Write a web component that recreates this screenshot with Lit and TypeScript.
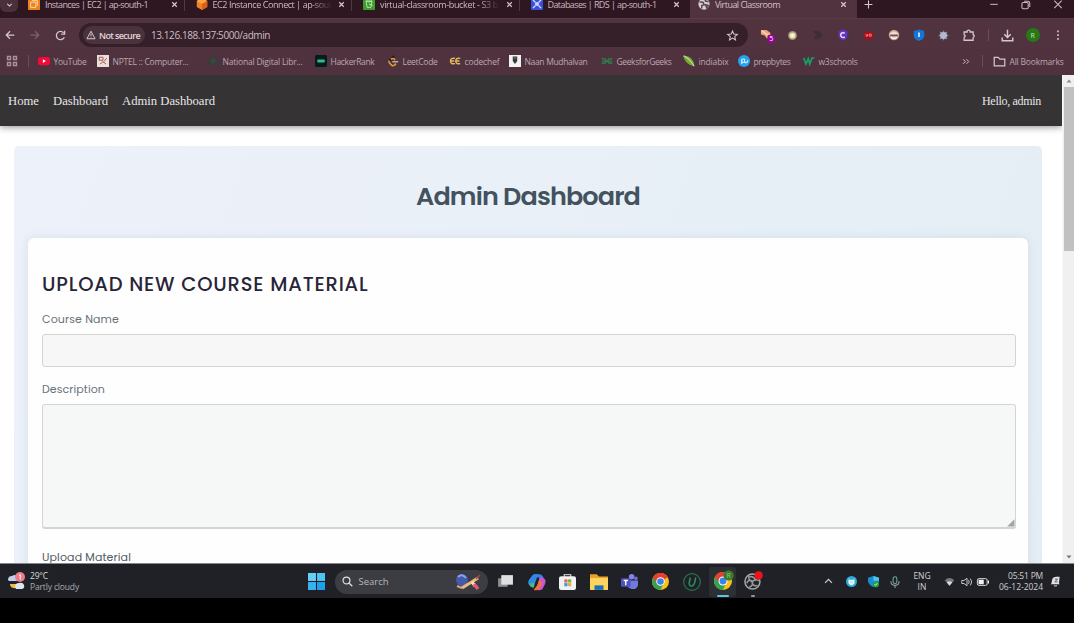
import { LitElement, html, css, svg } from "lit";
import { customElement, property } from "lit/decorators.js";

/* A one-line label whose tracking is computed so the text spans `w` pixels. */
@customElement("fit-text")
class FitText extends LitElement {
  static styles = css`
    :host { display: inline-block; white-space: pre; flex: none; }
  `;
  @property({ type: Number }) w = 0;
  @property() text = "";
  firstUpdated() {
    const span = this.renderRoot.querySelector("span") as HTMLElement;
    const natural = span.getBoundingClientRect().width;
    if (this.w && natural) {
      span.style.letterSpacing = `${(this.w - natural) / this.text.length}px`;
    }
  }
  render() {
    return html`<span>${this.text}</span>`;
  }
}

const t = (text: string, w: number) => html`<fit-text .text=${text} .w=${w}></fit-text>`;
const icon = (size: number, body: unknown, box = 16) =>
  html`<svg width=${size} height=${size} viewBox="0 0 ${box} ${box}" fill="none">${body}</svg>`;

const cross = icon(9, svg`<path d="M4 4l8 8M12 4l-8 8" stroke="#d9c8cf" stroke-width="2.100"/>`);
const chrome = svg`
  <circle cx="8" cy="8" r="8" fill="#fbc116"/>
  <path d="M8 8 L1.1 4 A8 8 0 0 1 14.9 4 Z" fill="#e8402f"/>
  <path d="M8 8 L1.1 4 A8 8 0 0 0 8 16 L10.5 10.5Z" fill="#34a350"/>
  <path d="M8 4.2H15a8 8 0 0 0-14-.2L4.6 10Z" fill="#e8402f"/>
  <circle cx="8" cy="8" r="4" fill="#fff"/><circle cx="8" cy="8" r="3.1" fill="#3b82ec"/>`;

const tabs = [
  { label: "Instances | EC2 | ap-south-1", w: 103, fade: false,
    art: svg`<rect width="16" height="16" rx="1" fill="#ee8220"/><path d="M3.500 5.500h7v7h-7zM5.500 3.500h7v7" stroke="#ffd9a6" stroke-width="1.300"/>` },
  { label: "EC2 Instance Connect | ap-sout", w: 119, fade: true,
    art: svg`<path d="M8 0l7 4v8l-7 4-7-4V4z" fill="#f08125"/><path d="M8 0l7 4-7 4-7-4z" fill="#ffa446"/><path d="M8 8l7-4v8l-7 4z" fill="#d9601a"/>` },
  { label: "virtual-classroom-bucket - S3 b", w: 118, fade: true,
    art: svg`<rect width="16" height="16" rx="1" fill="#3f9a30"/><path d="M4 4l1.500 8.500h5L12 4zM4 4q4 2.500 8 0M8 8l5 2" stroke="#b8e4a5" stroke-width="1.300"/>` },
  { label: "Databases | RDS | ap-south-1", w: 109, fade: false,
    art: svg`<rect width="16" height="16" rx="1" fill="#3a50dc"/><path d="M2.500 2.500l3.500 3.500M13.500 2.500L10 6M2.500 13.500L6 10M13.500 13.500L10 10" stroke="#dbe2ff" stroke-width="1.600"/><circle cx="8" cy="8" r="2.800" fill="#c9d4ff"/>` },
  { label: "Virtual Classroom", w: 65, fade: false,
    art: svg`<circle cx="8" cy="8" r="7.500" fill="#d5cdd2"/><path d="M2 5l5 1 1 3-3 1v4M9 1l1 3 4 1M10 9l4 1-2 4z" stroke="#5d4751" stroke-width="2"/>` },
];

const bookmarks = [
  { label: "YouTube", w: 33, art: svg`<rect x="0" y="2.500" width="16" height="11" rx="3" fill="#f5093a"/><path d="M6.500 5.500v5l4-2.500z" fill="#fff"/>` },
  { label: "NPTEL :: Computer...", w: 76, art: svg`<rect width="16" height="16" fill="#eadfdb"/><path d="M3 3h5v4H3zM9 9l4-5M4 12l4-3 4 3" stroke="#a65a4c" stroke-width="1.300"/>` },
  { label: "National Digital Libr...", w: 80, art: svg`<circle cx="8" cy="8" r="7" fill="#3d3b3b"/><path d="M4 8h8M8 4v8" stroke="#394c3e" stroke-width="2"/>` },
  { label: "HackerRank", w: 44, art: svg`<rect width="16" height="16" rx="2" fill="#091a1e"/><rect x="3" y="6" width="10" height="4" rx="1" fill="#26c08b"/>` },
  { label: "LeetCode", w: 35, art: svg`<path d="M9.500 1L3 7.500" stroke="#1b1517" stroke-width="2"/><path d="M3 7.500q-1 1.500 0 2.500l3 3.500q1.500 1.500 4 0l2-2M5 5.500q3-2 6 1" stroke="#eaa02f" stroke-width="2"/><path d="M7 9h8" stroke="#c8b4ba" stroke-width="1.800"/>` },
  { label: "codechef", w: 35, art: svg`<path d="M8 4.500q-6-1-6 3.500t6 3.500M15 4.500q-6-1-6 3.500t6 3.500M3 8h4M10 8h4" stroke="#e0b65e" stroke-width="2"/>` },
  { label: "Naan Mudhalvan", w: 63, art: svg`<rect width="16" height="16" fill="#f4f1f1"/><path d="M5 2h6v6l-3 4-3-4z" fill="#343b3c"/><path d="M6 4h4" stroke="#8b9d6a"/>` },
  { label: "GeeksforGeeks", w: 55, art: svg`<path d="M1 5q6-1 6 3t-6 2.500M1 8h14M15 5q-6-1-6 3t6 2.500" stroke="#298b4d" stroke-width="1.600"/>` },
  { label: "indiabix", w: 30, art: svg`<path d="M0 1q14-1 15 14Q4 14 0 1z" fill="#75a63c"/><path d="M1 1q8 4 14 14" stroke="#c6dc89" stroke-width="1.500"/>` },
  { label: "prepbytes", w: 37, art: svg`<circle cx="8" cy="8" r="8" fill="#24a3ee"/><path d="M5 12V6q4-2 4 1.500T5 9M9 10q4 1 4-3" stroke="#d9f1ff" stroke-width="1.500"/>` },
  { label: "w3schools", w: 39, art: svg`<path d="M1 4l3 8 3-7 2 7 3-8h3" stroke="#15a566" stroke-width="2.200"/>` },
];

const extensions = [
  svg`<path d="M1 2h6l4 3v6H7L5 8 1 7z" fill="#e9a581"/><path d="M2 3l7 5" stroke="#ffd4b5" stroke-width="1.500"/><rect x="8" y="7.500" width="8" height="8.500" rx="1.500" fill="#930795"/><text x="12" y="14.200" font-size="7" fill="#fff" text-anchor="middle" font-family="Open Sans">5</text>`,
  svg`<circle cx="8" cy="8" r="6.500" fill="#a08e70"/><circle cx="8" cy="8" r="4.500" fill="#e6e1b8"/><path d="M6.500 6h3v4h-3z" fill="#fffbe0"/>`,
  svg`<path d="M2 3h5l5 5-5 5H2l4-5zM9 3l5 5-5 5" fill="#3f2d35" stroke="#3f2d35"/>`,
  svg`<path d="M8 1l6 2v5q0 5-6 7.500Q2 13 2 8V3z" fill="#6135c2"/><path d="M10.500 5.500Q5 4 5 8t5.500 3" stroke="#eadfff" stroke-width="2"/>`,
  svg`<path d="M1 3.500L5 2h6l4 1.500v7L11 14H5l-4-3.500z" fill="#a60f1d"/><path d="M4.500 6v3h2V6M9 6h3v3H9z" stroke="#ee8c91" stroke-width="1.300"/>`,
  svg`<circle cx="8" cy="8" r="7" fill="#c9a092"/><path d="M1.500 7q6-8 13 0z" fill="#eadbd1"/><path d="M3 8.500h10" stroke="#6d4f52" stroke-width="1.600"/><path d="M4 11q4 3 8 0" stroke="#fff" stroke-width="2"/>`,
  svg`<path d="M8 .5l7 2v6q0 5-7 7.500-7-2.500-7-7.500v-6z" fill="#1475d8"/><path d="M8 4.500v6" stroke="#dceeff" stroke-width="2.200"/>`,
  svg`<path d="M8 1v14M1 8h14M3 3l10 10M13 3L3 13" stroke="#7e8dad" stroke-width="2"/><circle cx="8" cy="8" r="5" fill="#b6b8cb"/>`,
  svg`<path d="M1.500 4h4V2.500q2-2 4 0V4h4v3.500q3 1.500 0 4V15h-12v-4q3-1.500 0-3.500z" stroke="#d6c6cd" stroke-width="1.700"/>`,
];

const apps = [
  svg`<path d="M1 5h9v8H1z" fill="#8b8c90"/><path d="M4 2h11v9H4z" fill="#dfdfe1"/>`,
  svg`<path d="M4 2q1-1 5-1L6 11q-1 2-4 1Q-1 9 1 6z" fill="#2c9bed"/><path d="M5 1h5q3 0 4 4L9 4 5 12H3Q0 10 2 6z" fill="#3286e8"/><path d="M2 9h4l-1 4q-2 0-3-2z" fill="#4fc06a"/><path d="M10 4h3q4 2 2 6l-2 4q-2 2-5 1z" fill="#c755d4"/><path d="M8 11l2-5 3 3-3 5q-2 2-5 1z" fill="#f0713b"/><path d="M8 4L5.500 11h2L10 4z" fill="#202126"/>`,
  svg`<path d="M5 4V1.500h6V4" stroke="#b8bcc0" stroke-width="1.300"/><rect y="3" width="16" height="13" rx="2" fill="#f0f1f2"/><path d="M5 6h3v3H5z" fill="#e16a42"/><path d="M8.500 6h3v3h-3z" fill="#80ad45"/><path d="M5 9.500h3v3H5z" fill="#3b98d8"/><path d="M8.500 9.500h3v3h-3z" fill="#e7ad32"/>`,
  svg`<path d="M0 1h6l2 2h8v12H0z" fill="#e6a327"/><path d="M0 4.500h16v10.500H0z" fill="#ffd35d"/><path d="M4 15v-4h8v4z" fill="#1872b8"/>`,
  svg`<circle cx="10" cy="3.500" r="2.600" fill="#8286ea"/><circle cx="14" cy="5" r="1.800" fill="#6a6ed2"/><path d="M6 7h10v4q-1 5-6 4-4-1-4-4z" fill="#7378dc"/><rect y="5" width="9" height="8" rx="1" fill="#4d55bd"/><path d="M2.500 7h4M4.500 7v4.500" stroke="#fff" stroke-width="1.300"/>`,
  chrome,
  svg`<circle cx="8" cy="8" r="7.400" stroke="#23734e" stroke-width="1.100"/><path d="M6.500 4L5.500 9q0 3 2.500 2.500Q10 11 10.500 8l.8-4" stroke="#2b9362" stroke-width="1.300"/>`,
];

@customElement("app-root")
class AppRoot extends LitElement {
  static styles = css`
    * { box-sizing: border-box; }
    :host { display: flex; flex-direction: column; width: 1074px; height: 623px; overflow: hidden; background: #000; font-family: "Open Sans", "Noto Sans", sans-serif; }
    svg { display: block; flex: none; overflow: visible; }
    .strip { height: 18px; flex: none; display: grid; grid-template-columns: 18px 2px repeat(4, 167.5px) 167px 22px 1fr; background: #2f1722; color: #cbb8c0; font-size: 9px; line-height: 11px; }
    .strip > * { margin-top: -1px; }
    .search-tabs { height: 13px; background: #4a303b; border-radius: 0 0 6px 6px; display: flex; justify-content: center; padding-top: 2px; }
    .tab { height: 19px; display: flex; align-items: flex-start; padding: 0 9px 0 8px; gap: 5px; }
    .tab > svg { margin-top: -1px; }
    .tab .close { margin-top: 1px; }
    .tab .name { flex: 1; min-width: 0; overflow: hidden; height: 12px; }
    .tab .faded { -webkit-mask-image: linear-gradient(90deg, #000 82%, transparent); mask-image: linear-gradient(90deg, #000 82%, transparent); }
    .line { width: 1px; height: 11px; background: #543844; margin: 1px -6px 0 0; }
    .tab.active { background: #50333f; color: #d3c0c8; }
    .plus { padding: 1px 0 0 7px; }
    .wins { display: flex; justify-content: flex-end; gap: 22px; padding: 1px 11px 0 0; }
    .toolbar { height: 31px; flex: none; background: #50333e; display: grid; grid-template-columns: 25px 25px 29px 669px 7px repeat(9, 25.2px) 14px 24px 26px 24px; align-items: center; justify-items: center; padding-top: 2px; border-top: 1px solid #573b45; }
    .toolbar .first { margin-right: 6px; }
    .toolbar .reload { margin-right: 9px; }
    .url { width: 669px; height: 24px; border-radius: 12px; background: #35202a; display: flex; align-items: center; padding: 0 10px 0 4px; color: #cdbcc4; font-size: 10px; }
    .chip { width: 62px; height: 18px; border-radius: 9px; background: #4b333e; display: flex; align-items: center; gap: 3px; padding-left: 3px; margin-right: 6px; font-size: 9px; font-weight: 600; color: #e2d4da; }
    .star { margin-left: auto; }
    .divider { width: 1px; height: 12px; background: #6b4d59; }
    .avatar { width: 14px; height: 14px; border-radius: 50%; background: #287817; color: #c5e8b8; display: grid; place-items: center; font-size: 7px; }
    .marks { height: 26px; flex: none; background: #4f323e; display: grid; grid-template-columns: 22px 10px 59px 110px 108px 72px 62px 60px 92px 82px 55px 65px 159px 20px 11px 1fr; padding: 0 9px 2px 6px; align-items: center; color: #bca7b0; font-size: 8.500px; }
    .mark { display: flex; align-items: center; gap: 3.5px; }
    .page { height: 489px; flex: none; display: grid; grid-template-columns: 1062px 12px; background: #fff; overflow: hidden; border-bottom: 1px solid #85858a; }
    .view { overflow: hidden; height: 488px; }
    nav { height: 51px; background: #353334; display: flex; align-items: center; gap: 14px; padding: 0 21px 0 8px; font: 12.700px/16px "Liberation Serif", serif; color: #e8e6e7; box-shadow: 0 1px 7px rgba(0, 0, 0, .45); }
    nav .hello { margin-left: auto; font-size: 12px; }
    .panel { margin: 20px 20px 0 14px; padding: 0 14px; height: 600px; border-radius: 5px; background: linear-gradient(110deg, #edf1f9, #eaf0f8 40%, #e6eff6 65%, #e5edf4); font-family: Poppins, Inter, sans-serif; }
    h1 { margin: 0; height: 92px; display: flex; justify-content: center; align-items: center; padding-top: 8px; font-size: 25.500px; font-weight: 600; line-height: 36px; color: #43525f; }
    .card { height: 500px; background: #fefefe; border-radius: 6px; padding: 32px 12px 0 14px; box-shadow: 0 0 10px rgba(80, 105, 120, .13); }
    h2 { margin: 0; height: 29px; line-height: 30px; font-size: 19.500px; font-weight: 500; color: #292538; }
    label { display: block; height: 16px; line-height: 16px; font-size: 11px; color: #68717b; }
    .l1 { margin: 12px 0 7px; }
    .l2 { margin: 14px 0 7px; }
    .l3 { margin: 20px 0 0; color: #515963; }
    .field { height: 33px; border: 1px solid #d3d4d4; border-radius: 3px; background: #f7f7f7; }
    .area { height: 125px; border-bottom-width: 2px; background: #f6f8f7; display: flex; justify-content: flex-end; align-items: flex-end; }
    .scroll { background: #f0f0f0; border-left: 1px solid #f8f8f8; display: flex; flex-direction: column; align-items: center; }
    .cap { height: 12px; display: flex; align-items: center; }
    .thumb { width: 10px; height: 164px; background: #c1c1c1; }
    .cap.down { margin-top: auto; }
    .taskbar { height: 34px; flex: none; background: #202126; display: grid; grid-template-columns: 301px 31px 158px repeat(7, 31px) 31px 30px 49px 23px 22px 22px 22px 32px 22px 14px 18px 51px 24px; align-items: center; justify-items: center; color: #d0d0d2; font-size: 8.500px; line-height: 11px; padding-top: 1px; }
    .weather { justify-self: start; display: flex; gap: 5px; padding: 0 0 2px 7px; align-items: center; }
    .weather .lines { display: flex; flex-direction: column; color: #aaaaae; }
    .lines fit-text:first-child { color: #dadadc; }
    .search { width: 153px; height: 24px; border-radius: 12px; background: #3c3d42; display: flex; align-items: center; gap: 6px; padding: 0 6px 0 7px; font-size: 9.500px; color: #b8b8bc; }
    .search .art { margin-left: auto; }
    .running { width: 27px; height: 30px; border-radius: 3px; background: #2c3034; display: flex; flex-direction: column; align-items: center; justify-content: space-between; padding-top: 5px; }
    .bar { width: 12px; height: 2px; border-radius: 1px; background: #59c5e4; }
    .obs { background: none; }
    .obs .bar { width: 4px; background: #929499; }
    .stack { display: flex; flex-direction: column; align-items: center; padding-bottom: 1px; }
    .clock { align-items: flex-end; justify-self: end; padding-bottom: 2px; }
  `;

  render() {
    const pale = "#d6c6cd";
    return html`
      <div class="strip">
        <div class="search-tabs">${icon(9, svg`<path d="M4 5l4 4 4-4" stroke=${pale} stroke-width="2"/>`)}</div>
        <span></span>
        ${tabs.map((tab, i) => html`
          <div class="tab ${i === 4 ? "active" : ""}">
            ${icon(12, tab.art)}
            <div class="name ${tab.fade ? "faded" : ""}">${t(tab.label, tab.w)}</div>
            <span class="close">${cross}</span>
            ${i < 3 ? html`<i class="line"></i>` : ""}
          </div>`)}
        <div class="plus">${icon(9, svg`<path d="M8 1v14M1 8h14" stroke="#d9c8cf" stroke-width="1.900"/>`)}</div>
        <div class="wins">
          ${icon(10, svg`<path d="M2 7h12" stroke="#bca7b0" stroke-width="1.800"/>`)}
          ${icon(10, svg`<rect x="1.500" y="4" width="10" height="10" rx="2" stroke="#cbb8c0" stroke-width="1.700"/><path d="M5 2h6q3 0 3 3v6" stroke="#cbb8c0" stroke-width="1.700"/>`)}
          ${icon(10, svg`<path d="M2 1l12 12M14 1L2 13" stroke="#cbb8c0" stroke-width="1.700"/>`)}
        </div>
      </div>

      <div class="toolbar">
        <span class="first">${icon(10, svg`<path d="M15 8H2M8 2L2 8l6 6" stroke=${pale} stroke-width="2"/>`)}</span>
        <span class="first">${icon(10, svg`<path d="M1 8h13M8 2l6 6-6 6" stroke="#7d606c" stroke-width="2"/>`)}</span>
        <span class="reload">${icon(11, svg`<path d="M13.500 10.500A6 6 0 1 1 12.500 4M14 1v5H9" stroke=${pale} stroke-width="1.900"/>`)}</span>
        <div class="url">
          <div class="chip">${icon(10, svg`<path d="M8 2l6.500 12h-13zM8 6v4M8 11.500v1" stroke="#dfd0d6" stroke-width="1.500"/>`)}${t("Not secure", 41)}</div>
          ${t("13.126.188.137:5000/admin", 119)}
          <span class="star">${icon(11, svg`<path d="M8 1.500l2 4.500 5 .4-3.800 3.200 1.200 4.900L8 11.800l-4.400 2.700 1.200-4.900L1 6.400 6 6z" stroke=${pale} stroke-width="1.500"/>`)}</span>
        </div>
        <span></span>
        ${extensions.map((art, i) => icon(i === 0 ? 15 : i === 1 || i === 7 || i === 4 ? 11 : 12, art))}
        <i class="divider"></i>
        ${icon(13, svg`<path d="M8 1v9M4 6.500l4 4 4-4M1.500 10.500v4h13v-4" stroke=${pale} stroke-width="1.800"/>`)}
        <div class="avatar">R</div>
        ${icon(12, svg`<path d="M8 2v2.200M8 7v2.200M8 12v2.200" stroke=${pale} stroke-width="2.200"/>`)}
      </div>

      <div class="marks">
        ${icon(12, svg`<path d="M2 2h4v4H2zM10 2h4v4h-4zM2 10h4v4H2zM10 10h4v4h-4z" stroke="#aa929d" stroke-width="1.900"/>`)}
        <i class="divider"></i>
        ${bookmarks.map((b) => html`<div class="mark">${icon(12, b.art)}${t(b.label, b.w)}</div>`)}
        ${icon(9, svg`<path d="M2 4l4 4-4 4M8 4l4 4-4 4" stroke=${pale} stroke-width="1.700"/>`)}
        <i class="divider"></i>
        <div class="mark">${icon(13, svg`<path d="M1.500 3h5l2 2h6v8.500h-13z" stroke=${pale} stroke-width="1.500"/>`)}${t("All Bookmarks", 54)}</div>
      </div>

      <div class="page">
        <div class="view">
          <nav>
            ${t("Home", 31)}${t("Dashboard", 55)}${t("Admin Dashboard", 93)}
            <span class="hello">${t("Hello, admin", 59)}</span>
          </nav>
          <main class="panel">
            <h1>${t("Admin Dashboard", 224)}</h1>
            <section class="card">
              <h2>${t("UPLOAD NEW COURSE MATERIAL", 326.5)}</h2>
              <label class="l1">${t("Course Name", 77)}</label>
              <div class="field"></div>
              <label class="l2">${t("Description", 63)}</label>
              <div class="field area">${icon(9, svg`<path d="M15 2v13H2z" fill="#a2a5a4"/>`)}</div>
              <label class="l3">${t("Upload Material", 89)}</label>
            </section>
          </main>
        </div>
        <div class="scroll">
          <div class="cap">${icon(8, svg`<path d="M3 11l5-6 5 6z" fill="#8b898a"/>`)}</div>
          <div class="thumb"></div>
          <div class="cap down">${icon(8, svg`<path d="M3 5l5 6 5-6z" fill="#77777a"/>`)}</div>
        </div>
      </div>

      <div class="taskbar">
        <div class="weather">
          ${icon(18, svg`<path d="M1 8q0-4 4-4 4-3 6 2l-1 3H2z" fill="#c0cff0"/><path d="M3 12h8q-1 5-5 4-3-1-3-4z" fill="#f0b744"/><path d="M8 15q0-4 4-4 4-1 5 2 1 3-2 4H9z" fill="#dce5f2"/><circle cx="13" cy="5" r="5" fill="#ee7c8b"/><path d="M12 3.500l1.300-.8V7.500" stroke="#fff"/>`, 18)}
          <div class="lines">${t("29°C", 18)}${t("Partly cloudy", 49)}</div>
        </div>
        ${icon(17, svg`<path d="M0 0h7.500v7.500H0z" fill="#68cdf5"/><path d="M8.500 0H16v7.500H8.500z" fill="#4fc2f3"/><path d="M0 8.500h7.500V16H0z" fill="#36b2ef"/><path d="M8.500 8.500H16V16H8.500z" fill="#209fe9"/>`)}
        <div class="search">
          ${icon(11, svg`<circle cx="6.500" cy="6.500" r="5" stroke="#e0e0e2" stroke-width="1.800"/><path d="M10.500 10.500l4.500 4.500" stroke="#e0e0e2" stroke-width="1.800"/>`)}
          ${t("Search", 30)}
          <span class="art"><svg width="28" height="18" viewBox="0 0 28 18" fill="none"><circle cx="8" cy="7" r="6" fill="#465aad"/><path d="M4 4q4-4 8 1" stroke="#8da2ed" stroke-width="2"/><path d="M3 13l5 2" stroke="#cda77b" stroke-width="2"/><path d="M8 15L24 5" stroke="#edb77e" stroke-width="3.200"/><path d="M18 9l3 4" stroke="#f3dec3" stroke-width="3"/><path d="M20 11l4 5" stroke="#e85773" stroke-width="3.500"/><path d="M22 6l4-4" stroke="#9b4c48" stroke-width="1.500"/></svg></span>
        </div>
        ${apps.map((art, i) => icon(i === 6 || i === 1 || i === 3 ? 18 : 17, art))}
        <div class="running">${icon(18, svg`${chrome}<circle cx="13" cy="3" r="4.600" fill="#397b2c"/><text x="13" y="5.200" font-size="6" text-anchor="middle" font-family="Open Sans" fill="#9bc78e">R</text>`)}<i class="bar"></i></div>
        <div class="running obs">${icon(18, svg`<circle cx="7.500" cy="8.500" r="6.700" fill="#242529" stroke="#a7a8ab" stroke-width="1.300"/><path d="M7.500 8.500q-4-1-3-5M7.500 8.500q3-3 6-.5M7.500 8.500q1 4-3 5M5 4q5 0 5 4M12 12q-4 1-5-3M2.500 10q1-4 5-2" stroke="#97989c" stroke-width="1.400"/><circle cx="13" cy="3" r="3.600" fill="#f31119"/>`)}<i class="bar"></i></div>
        <span></span>
        ${icon(11, svg`<path d="M3 10l5-5 5 5" stroke="#cfcfd2" stroke-width="1.700"/>`)}
        ${icon(11, svg`<circle cx="8" cy="8" r="8" fill="#2da9dc"/><path d="M3.500 5.500h9v5l-3 3h-3l-3-3z" fill="#e2f5fc"/><path d="M5 5.500L4 3.500M11 5.500l1-2M6 9h4" stroke="#9adcf4" stroke-width="1.300"/>`)}
        ${icon(11, svg`<path d="M8 0l8 2.500v5Q15 13 8 16 1 13 0 7.500v-5z" fill="#168ed2"/><path d="M8 0l8 2.500V7H8z" fill="#54c1ea"/><circle cx="11.500" cy="12" r="4.500" fill="#21a342"/><path d="M9.500 12l1.500 1.500 2.500-3" stroke="#fff" stroke-width="1.200"/>`)}
        ${icon(12, svg`<rect x="5.500" y="1" width="5" height="9" rx="2.500" stroke="#71a997" stroke-width="1.400"/><path d="M2.500 7q0 5.500 5.500 5.500T13.500 7M8 12.500V16" stroke="#8ea69f" stroke-width="1.400"/>`)}
        <div class="stack">${t("ENG", 17)}${t("IN", 9)}</div>
        ${icon(11, svg`<path d="M1 6q7-6 14 0l-7 8z" fill="#77787c"/><path d="M4 9q4-3 8 0l-4 5z" fill="#d9dadc"/>`)}
        ${icon(12, svg`<path d="M1 6h3l4-3v10l-4-3H1zM10 5.500q2 2.500 0 5M12.500 3.500q3.500 4.500 0 9" stroke="#c6c6c9" stroke-width="1.300"/>`)}
        ${icon(12, svg`<rect x=".5" y="3.500" width="13" height="9" rx="2" stroke="#dadadc" stroke-width="1.300"/><path d="M2 5h7v6H2zM14.500 6h1.500v4h-1.500z" fill="#f2f2f3"/>`)}
        <div class="stack clock">${t("05:51 PM", 35)}${t("06-12-2024", 44)}</div>
        ${icon(11, svg`<path d="M2 11l1.500-7Q5 1 9 1h5l-1 9 1 2H1z" fill="#e3e3e5"/><path d="M6 13.500q2 2 4 0" stroke="#cbcbd0" stroke-width="1.500"/><path d="M7 4.500h4l-4 4h4" stroke="#45464b" stroke-width="1.200"/>`)}
      </div>
    `;
  }
}
